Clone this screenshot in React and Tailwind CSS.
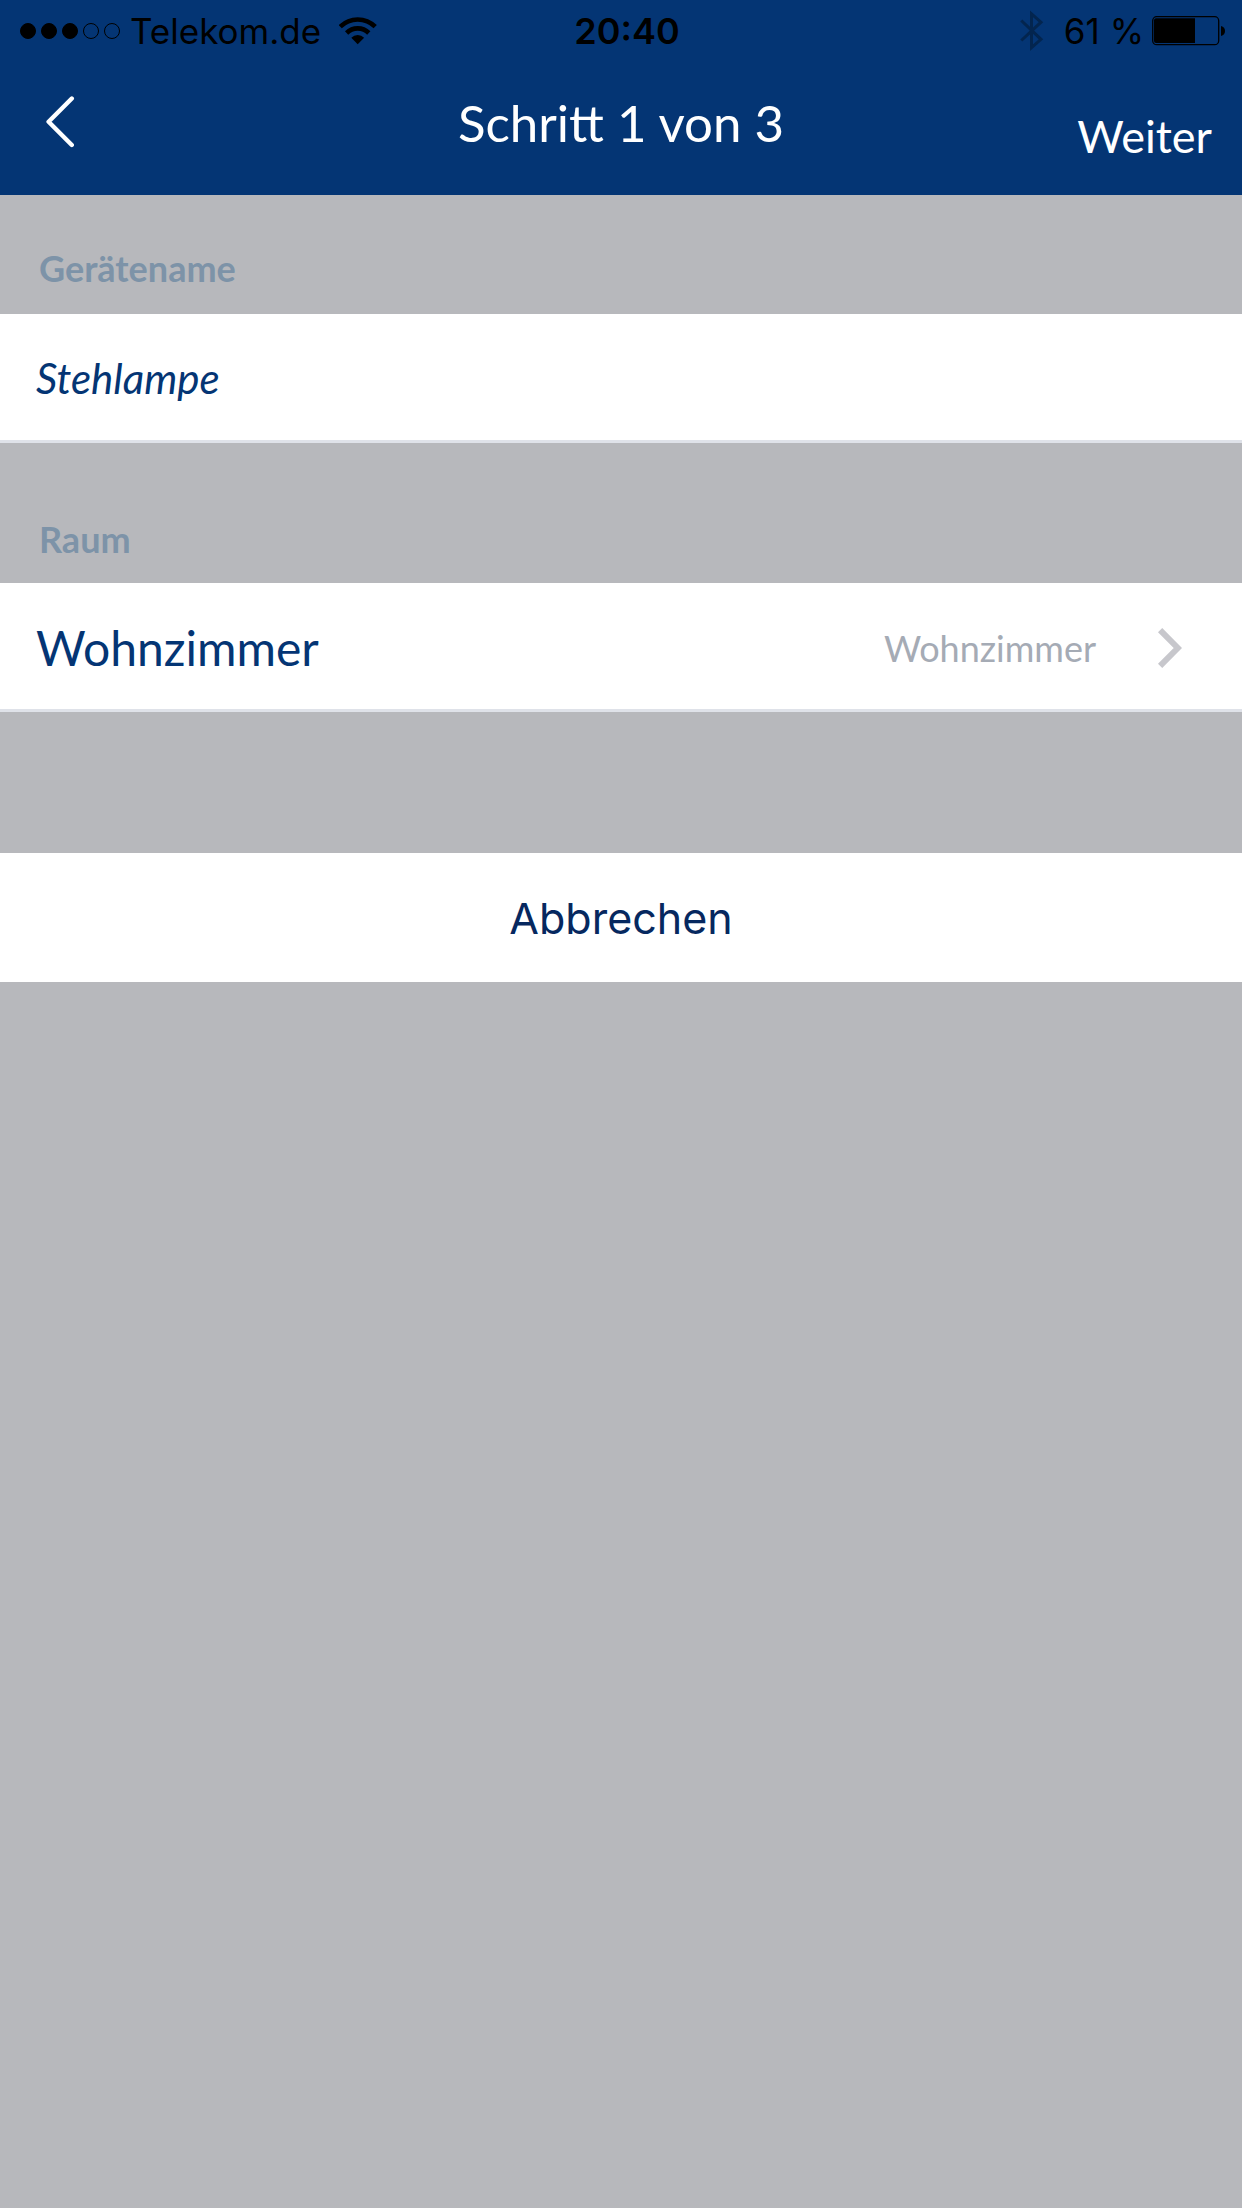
import { useState } from 'react';

const SignalDots = ({ strength }) => (
  <div className="flex gap-[5px]">
    {[1, 2, 3, 4, 5].map((dot) => (
      <span
        key={dot}
        className={`size-4 rounded-full border border-black ${dot <= strength ? 'bg-black' : ''}`}
      ></span>
    ))}
  </div>
);

const WifiIcon = () => (
  <svg width="38" height="28" viewBox="0 0 38 28" fill="none" stroke="#000" aria-hidden="true">
    <path d="M1.2 9.7 A24.7 24.7 0 0 1 36.2 9.7" strokeWidth="4.6" />
    <path d="M7.6 16 A15.7 15.7 0 0 1 29.8 16" strokeWidth="4.6" />
    <path d="M12.3 20.7 A9 9 0 0 1 25.1 20.7 L18.7 27.2 Z" fill="#000" stroke="none" />
  </svg>
);

const BluetoothIcon = () => (
  <svg width="24" height="42" viewBox="0 0 24 42" fill="none" stroke="#03254f" strokeWidth="3" aria-hidden="true">
    <path d="M1.3 10.5 L21 29.3 L11.5 37.7 V3.8 L21 12.2 L1.3 30.5" />
  </svg>
);

const BatteryIcon = () => (
  <svg width="74" height="30" viewBox="0 0 74 30" fill="none" aria-hidden="true">
    <rect x="0.7" y="0.7" width="66" height="28" rx="4" stroke="#000" strokeWidth="1.3" />
    <path d="M4 2.2 H43 V27 H4 Q2 27 2 25 V4.2 Q2 2.2 4 2.2 Z" fill="#000" />
    <path d="M69 10 Q73 11 73 15 Q73 19 69 20 Z" fill="#000" />
  </svg>
);

const StatusBar = () => (
  <div className="grid grid-cols-[1fr_auto_1fr] items-center pt-2 pl-5 pr-4 text-[35px] leading-[46px] text-black font-['Inter',sans-serif]">
    <div className="flex items-center gap-[10px]">
      <SignalDots strength={3} />
      <span>Telekom.de</span>
      <div className="pl-2">
        <WifiIcon />
      </div>
    </div>
    <span className="pl-2 text-4xl leading-[46px] font-semibold">20:40</span>
    <div className="flex items-center justify-end gap-2">
      <div className="pr-3">
        <BluetoothIcon />
      </div>
      <span>61 %</span>
      <BatteryIcon />
    </div>
  </div>
);

const NavBar = ({ title }) => (
  <div className="grid grid-cols-[1fr_auto_1fr] items-center pt-7 pb-[33px] px-[30px] text-white">
    <button type="button" aria-label="Zurück" className="justify-self-start pl-4">
      <svg width="30" height="52" viewBox="0 0 30 52" fill="none" stroke="#fff" strokeWidth="4.4" strokeLinecap="round" strokeLinejoin="round">
        <path d="M25.8 2.5 L2.6 25.8 L25.8 49" />
      </svg>
    </button>
    <h1 className="text-[51px] leading-[65px]">{title}</h1>
    <button type="button" className="justify-self-end pt-7 text-[45px] leading-[52px]">
      Weiter
    </button>
  </div>
);

const App = () => {
  const [name, setName] = useState('Stehlampe');

  return (
    <div className="min-h-screen bg-[#b7b8bc] font-['Lato',sans-serif]">
      <header className="bg-[#043574]">
        <StatusBar />
        <NavBar title="Schritt 1 von 3" />
      </header>

      <main>
        <label htmlFor="name" className="block pt-[51px] pb-6 px-[39px] text-4xl leading-[44px] font-bold text-[#7d93a8]">
          Gerätename
        </label>
        <input
          id="name"
          type="text"
          value={name}
          onChange={(e) => setName(e.target.value)}
          className="block w-full pt-9 pb-[34px] px-9 bg-white border-b-[3px] border-[#dfe2e9] text-[42px] leading-[56px] italic text-[#043574] outline-none"
        />

        <h2 className="pt-[74px] pb-[22px] px-[39px] text-4xl leading-[44px] font-bold text-[#7d93a8]">Raum</h2>
        <button
          type="button"
          className="flex w-full items-center pt-[37px] pb-[33px] pl-9 pr-[60px] bg-white border-b-[3px] border-[#dfe2e9] leading-[56px]"
        >
          <span className="text-5xl leading-[56px] text-[#043574]">Wohnzimmer</span>
          <span className="ml-auto mr-[62px] text-4xl leading-[56px] text-[#a5abb5]">Wohnzimmer</span>
          <svg width="24" height="40" viewBox="0 0 24 40" fill="none" stroke="#c7c7cc" strokeWidth="6" aria-hidden="true">
            <path d="M2.1 2.1 L19.8 20 L2.1 37.9" />
          </svg>
        </button>

        <button
          type="button"
          className="mt-[141px] block w-full pt-[37px] pb-9 bg-white text-center text-[43px] leading-[56px] text-[#06285f] font-['Inter',sans-serif]"
        >
          Abbrechen
        </button>
      </main>
    </div>
  );
};

export default App;
